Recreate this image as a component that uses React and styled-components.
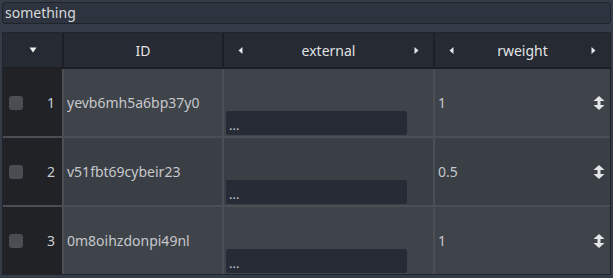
import React from "react";
import styled, { createGlobalStyle } from "styled-components";

const GlobalStyle = createGlobalStyle`
  html, body {
    margin: 0;
    padding: 0;
    background: #353b47;
    font-family: "Noto Sans", "Open Sans", sans-serif;
    font-size: 14px;
  }
`;

const Page = styled.div`
  display: flex;
  flex-direction: column;
  padding: 2px 2px 0 2px;
  width: 609px;
`;

const Search = styled.div`
  height: 20px;
  border: 1px solid #1f232a;
  border-radius: 3px;
  background: #2e343f;
  color: #d8d9db;
  display: flex;
  align-items: center;
  padding-left: 2px;
  line-height: 20px;
`;

const Table = styled.div`
  margin-top: 8px;
  border: 1px solid #20242b;
  display: flex;
  flex-direction: column;
  gap: 2px;
  background: #4b4e54;
`;

const cols = "59px 158px 209px 175px";

const HeaderRow = styled.div`
  display: grid;
  grid-template-columns: ${cols};
  column-gap: 2px;
  background: #1c2026;
  height: 34px;
  border-bottom: 2px solid #1c2026;
  margin-bottom: -2px;
`;

const HeadCell = styled.div`
  background: #252a33;
  color: #e2e3e5;
  display: flex;
  align-items: center;
  justify-content: ${(p) => (p.$spread ? "space-between" : "center")};
  padding: ${(p) => (p.$spread ? "0 14px 0 14px" : "0")};
`;

const Row = styled.div`
  display: grid;
  grid-template-columns: ${cols};
  column-gap: 2px;
  height: 67px;
`;

const IndexCell = styled.div`
  background: #202226;
  display: flex;
  align-items: center;
  justify-content: space-between;
  padding: 0 7px 0 6px;
  color: #c9cbce;
`;

const Check = styled.div`
  width: 14px;
  height: 14px;
  border-radius: 3px;
  background: #4a4d52;
`;

const Cell = styled.div`
  background: ${(p) => (p.$alt ? "#3a3e45" : "#3f434a")};
  color: #c6c8cb;
  display: flex;
  align-items: center;
  padding-left: 3px;
`;

const FieldCell = styled.div`
  background: ${(p) => (p.$alt ? "#3a3e45" : "#3f434a")};
  display: flex;
  align-items: flex-end;
  padding: 0 0 1px 2px;
`;

const Field = styled.div`
  width: 181px;
  height: 24px;
  background: #262b35;
  border-radius: 2px;
  color: #c6c8cb;
  font-size: 13px;
  line-height: 28px;
  padding-left: 3px;
  box-sizing: border-box;
  overflow: hidden;
`;

const NumberCell = styled(Cell)`
  justify-content: space-between;
  padding: 0 5px 0 3px;
`;

const Tri = ({ dir }) => (
  <svg width="5" height="7" viewBox="0 0 5 7">
    {dir === "left" ? (
      <polygon points="4.5,0 0.5,3.5 4.5,7" fill="#e6e7e9" />
    ) : (
      <polygon points="0.5,0 4.5,3.5 0.5,7" fill="#e6e7e9" />
    )}
  </svg>
);

const Down = () => (
  <svg width="8" height="6" viewBox="0 0 8 6">
    <polygon points="0.5,0.5 7.5,0.5 4,5.5" fill="#f0f0f0" />
  </svg>
);

const UpDown = () => (
  <svg width="12" height="14" viewBox="0 0 12 14">
    <polygon points="6,0 11.5,5 0.5,5" fill="#e4e5e7" />
    <rect x="4.5" y="4" width="3" height="6" fill="#e4e5e7" />
    <polygon points="6,14 11.5,9 0.5,9" fill="#e4e5e7" />
  </svg>
);

const rows = [
  { id: "yevb6mh5a6bp37y0", w: "1" },
  { id: "v51fbt69cybeir23", w: "0.5" },
  { id: "0m8oihzdonpi49nl", w: "1" },
];

export default function App() {
  return (
    <>
      <GlobalStyle />
      <Page>
        <Search>something</Search>
        <Table>
          <HeaderRow>
            <HeadCell>
              <Down />
            </HeadCell>
            <HeadCell>ID</HeadCell>
            <HeadCell $spread>
              <Tri dir="left" />
              <span>external</span>
              <Tri dir="right" />
            </HeadCell>
            <HeadCell $spread>
              <Tri dir="left" />
              <span>rweight</span>
              <Tri dir="right" />
            </HeadCell>
          </HeaderRow>
          {rows.map((r, i) => (
            <Row key={r.id}>
              <IndexCell>
                <Check />
                <span>{i + 1}</span>
              </IndexCell>
              <Cell $alt={i % 2 === 1}>{r.id}</Cell>
              <FieldCell $alt={i % 2 === 1}>
                <Field>...</Field>
              </FieldCell>
              <NumberCell $alt={i % 2 === 1}>
                <span>{r.w}</span>
                <UpDown />
              </NumberCell>
            </Row>
          ))}
        </Table>
      </Page>
    </>
  );
}
